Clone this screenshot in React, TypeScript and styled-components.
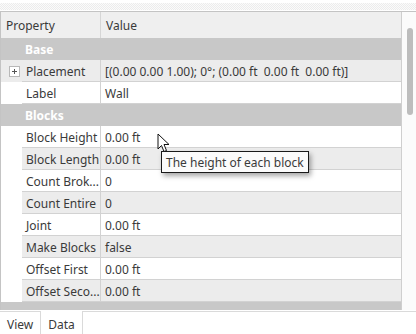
import styled, { createGlobalStyle } from "styled-components";

interface Row {
  kind: "group" | "prop";
  name: string;
  value?: string;
  expand?: boolean;
}

const rows: Row[] = [
  { kind: "group", name: "Base" },
  { kind: "prop", name: "Placement", value: "[(0.00 0.00 1.00); 0°; (0.00 ft  0.00 ft  0.00 ft)]", expand: true },
  { kind: "prop", name: "Label", value: "Wall" },
  { kind: "group", name: "Blocks" },
  { kind: "prop", name: "Block Height", value: "0.00 ft" },
  { kind: "prop", name: "Block Length", value: "0.00 ft" },
  { kind: "prop", name: "Count Brok...", value: "0" },
  { kind: "prop", name: "Count Entire", value: "0" },
  { kind: "prop", name: "Joint", value: "0.00 ft" },
  { kind: "prop", name: "Make Blocks", value: "false" },
  { kind: "prop", name: "Offset First", value: "0.00 ft" },
  { kind: "prop", name: "Offset Seco...", value: "0.00 ft" },
  { kind: "group", name: "" },
];

const GlobalStyle = createGlobalStyle`
  html, body {
    margin: 0;
    padding: 0;
    background: #ffffff;
  }
  body {
    font-family: "Noto Sans", "Open Sans", sans-serif;
    font-size: 12px;
    color: #3a3a3a;
  }
`;

const Window = styled.div`
  position: relative;
  width: 416px;
  height: 334px;
  display: flex;
  flex-direction: column;
  overflow: hidden;
  background: #fff;
`;

const Hatch = styled.div`
  height: 7px;
  margin-top: 3px;
  background-color: #f8f8f8;
  background-image: repeating-conic-gradient(#ececec 0 25%, #fbfbfb 0 50%);
  background-size: 2px 2px;
  flex-shrink: 0;
`;

const Panel = styled.div`
  display: flex;
  height: 298px;
  border-top: 1px solid #c4c4c4;
  margin-top: 1px;
  flex-shrink: 0;
`;

const Table = styled.div`
  width: 400px;
  border-left: 1px solid #c4c4c4;
  border-right: 1px solid #cfcfcf;
  overflow: hidden;
  display: flex;
  flex-direction: column;
`;

const Header = styled.div`
  display: grid;
  grid-template-columns: 100px 1fr;
  height: 26px;
  background: #efefef;
  flex-shrink: 0;
`;

const HeadCell = styled.div<{ divider?: boolean }>`
  display: flex;
  align-items: center;
  padding-left: 5px;
  padding-top: 1px;
  border-right: ${(p) => (p.divider ? "1px solid #d6d6d6" : "none")};
  color: #3a3a3a;
`;

const GroupRow = styled.div`
  height: 22px;
  flex-shrink: 0;
  background: #c8c8c8;
  color: #ffffff;
  font-weight: bold;
  display: flex;
  align-items: center;
  padding-left: 24px;
`;

const PropRow = styled.div<{ alt: boolean; full: boolean }>`
  height: 22px;
  flex-shrink: 0;
  display: grid;
  grid-template-columns: 21px 79px 1fr;
  background: ${(p) => (p.full && p.alt ? "#ececec" : "#ffffff")};
`;

const Branch = styled.div`
  display: flex;
  align-items: center;
  justify-content: center;
  padding-left: 5px;
`;

const Cell = styled.div<{ alt: boolean; divider?: boolean }>`
  display: flex;
  align-items: center;
  padding-left: 4px;
  padding-top: 1px;
  background: ${(p) => (p.alt ? "#ececec" : "#ffffff")};
  border-bottom: 1px solid #d2d2d2;
  border-right: ${(p) => (p.divider ? "1px solid #d2d2d2" : "none")};
  white-space: pre;
  overflow: hidden;
  color: #3a3a3a;
`;

const PlusBox = styled.div`
  width: 9px;
  height: 9px;
  border: 1px solid #b8b8b8;
  background: #fff;
  display: flex;
  align-items: center;
  justify-content: center;
  position: relative;
  &::before,
  &::after {
    content: "";
    position: absolute;
    background: #555;
  }
  &::before {
    width: 5px;
    height: 1px;
  }
  &::after {
    width: 1px;
    height: 5px;
  }
`;

const ScrollTrack = styled.div`
  width: 14px;
  background: #fbfbfb;
  padding-top: 16px;
  display: flex;
  justify-content: center;
`;

const Thumb = styled.div`
  width: 6px;
  height: 87px;
  border-radius: 3px;
  background: #bdbdbd;
  margin-left: 1px;
`;

const TabBar = styled.div`
  display: flex;
  align-items: flex-start;
  margin-top: 1px;
  height: 24px;
`;

const Tab = styled.div<{ active?: boolean }>`
  height: 24px;
  box-sizing: border-box;
  display: flex;
  align-items: center;
  padding: 0 7px;
  border-top: ${(p) => (p.active ? "none" : "1px solid #dadada")};
  border-right: 1px solid #dadada;
  background: #fff;
  color: #3a3a3a;
  padding-top: ${(p) => (p.active ? "2px" : "1px")};
`;

const TabFill = styled.div`
  flex: 1;
  border-top: 1px solid #dadada;
  height: 24px;
  box-sizing: border-box;
`;

const Tooltip = styled.div`
  position: absolute;
  left: 161px;
  top: 151px;
  height: 22px;
  box-sizing: border-box;
  padding: 1px 4px 0;
  display: flex;
  align-items: center;
  background: #fbfbfb;
  border: 1px solid #1a1a1a;
  color: #3a3a3a;
  box-shadow: 2px 3px 5px rgba(0, 0, 0, 0.35);
  white-space: nowrap;
`;

const Cursor = styled.svg`
  position: absolute;
  left: 157px;
  top: 133px;
`;

export default function App() {
  return (
    <Window>
      <GlobalStyle />
      <Hatch />
      <Panel>
        <Table>
          <Header>
            <HeadCell divider>Property</HeadCell>
            <HeadCell>Value</HeadCell>
          </Header>
          {rows.map((r, i) => {
            if (r.kind === "group") {
              return <GroupRow key={i}>{r.name}</GroupRow>;
            }
            const alt = i % 2 === 1;
            return (
              <PropRow key={i} alt={alt} full={!!r.expand}>
                <Branch>{r.expand && <PlusBox />}</Branch>
                <Cell alt={alt} divider>
                  {r.name}
                </Cell>
                <Cell alt={alt}>{r.value}</Cell>
              </PropRow>
            );
          })}
        </Table>
        <ScrollTrack>
          <Thumb />
        </ScrollTrack>
      </Panel>
      <TabBar>
        <Tab>View</Tab>
        <Tab active>Data</Tab>
        <TabFill />
      </TabBar>
      <Tooltip>The height of each block</Tooltip>
      <Cursor width="14" height="21" viewBox="0 0 14 21">
        <path
          d="M1 1 L1 16 L4.5 12.5 L7 18.5 L9.5 17.5 L7 11.5 L12 11.5 Z"
          fill="#ffffff"
          stroke="#111111"
          strokeWidth="1"
          strokeLinejoin="round"
        />
      </Cursor>
    </Window>
  );
}
